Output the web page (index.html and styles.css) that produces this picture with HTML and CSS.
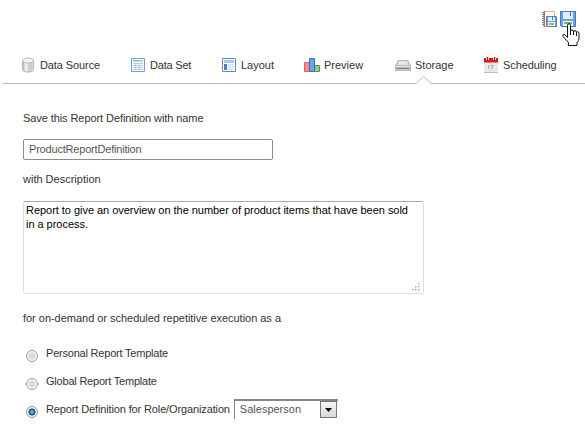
FILE: index.html
```html
<!DOCTYPE html>
<html lang="en">
<head>
<meta charset="utf-8">
<title>Report Storage</title>
<link rel="stylesheet" href="styles.css">
</head>
<body>
<div class="toolbar">
  <svg class="tool" width="16" height="16" viewBox="0 0 16 16">
    <path d="M2.500.5h11v15h-11z" fill="#fcfaf8" stroke="#cdb9aa"/>
    <path d="M3 0h1v16H3z" fill="#b96b42"/>
    <path d="M1 1.500h2M1 3.500h2M1 5.500h2M1 7.500h2M1 9.500h2M1 11.500h2M1 13.500h2" stroke="#888"/>
    <path d="M5.500 5.500h10v10h-9l-1-1z" fill="#6c9fe0" stroke="#4a7dc6"/>
    <path d="M7 6h7v4H7z" fill="#e3edfa"/><path d="M11 6h1v3h-1z" fill="#4a7dc6"/>
    <path d="M7 11h7v4H7z" fill="#f4faf0"/><path d="M8 12h5v2H8z" fill="#7cc763"/>
  </svg>
  <svg class="tool" width="16" height="16" viewBox="0 0 16 16">
    <path d="M.5.5h15v15h-14l-1-1z" fill="#6ba1e6" stroke="#4479c6"/>
    <path d="M3 1h10v7H3z" fill="#e3edfa"/><path d="M10 1h1v4h-1z" fill="#3d70b9"/>
    <path d="M3 10h10v5H3z" fill="#f4faf0"/><path d="M4 11h8v2H4z" fill="#69c44c"/>
  </svg>
  <svg class="pointer" width="18" height="24" viewBox="0 0 18 24">
    <path d="M5.500 14.500V2.500Q5.500.7 7 .7T8.500 2.500v6q0-1.500 1.500-1.500t1.500 2q0-1.300 1.500-1.300t1.500 2q0-1 1.200-1t1.300 1.800v5q0 2-2 4v3H6.500v-3L1 13.500q-.7-2 1-2 1.300 0 3.500 3z" fill="#fff" stroke="#111"/>
    <path d="M8.500 8v4M11.500 9v3M14.500 10v3" stroke="#111"/>
  </svg>
</div>
<nav class="tabs">
  <div class="tab source">
    <svg width="14" height="16" viewBox="0 0 14 16">
      <defs><linearGradient id="cyl"><stop stop-color="#aaa"/><stop offset=".3" stop-color="#f8f8f8"/><stop offset=".65" stop-color="#c8c8c8"/><stop offset="1" stop-color="#ddd"/></linearGradient></defs>
      <path d="M.5 3.500v9q0 2.500 5.500 2.500t5.500-2.500v-9z" fill="url(#cyl)" stroke="#b8b8b8"/>
      <ellipse cx="6" cy="3.500" rx="5.500" ry="2.500" fill="#f1f1f1" stroke="#bbb"/>
    </svg><span>Data Source</span>
  </div>
  <div class="tab set">
    <svg width="14" height="16" viewBox="0 0 14 16">
      <path d="M.5 1.500h13v13H.5z" fill="#fff" stroke="#739dde"/>
      <path d="M2 3h10v1.500H2z" fill="#8acb7b"/>
      <path d="M2 6.500h10M2 8.500h10M2 10.500h10M2 12.500h10M4.500 6v7M8.500 6v7" stroke="#b4cbed"/>
    </svg><span>Data Set</span>
  </div>
  <div class="tab layout">
    <svg width="14" height="16" viewBox="0 0 14 16">
      <path d="M.5 1.500h13v13H.5z" fill="#fff" stroke="#5c8bcb"/>
      <path d="M2 3h10v3H2z" fill="#a9c8ef"/><path d="M2 7h3v6H2z" fill="#4a80c6"/>
      <path d="M6.500 7.500h5v5h-5z" fill="#e8eef7" stroke="#d8e1ee"/>
    </svg><span>Layout</span>
  </div>
  <div class="tab preview">
    <svg width="16" height="16" viewBox="0 0 16 16">
      <path d="M.5 5.500h5v9h-5z" fill="#fa8a8a" stroke="#df6060"/>
      <path d="M10.500 8.500h5v6h-5z" fill="#91ca8c" stroke="#559b53"/>
      <path d="M5.500 1.500h5v13h-5z" fill="#6da2ef" stroke="#3c6fc6"/>
    </svg><span>Preview</span>
  </div>
  <div class="tab storage">
    <svg width="16" height="16" viewBox="0 0 16 16">
      <path d="M3 3h10l3 5.500V14H0V8.500z" fill="#b9b9b9"/>
      <path d="M4 4h8l2 4H2z" fill="#e6e6e6"/><path d="M1 9h14v1H1z" fill="#e5e5e5"/>
      <path d="M2 11h12v1H2z" fill="#777"/><path d="M1 12h14v1H1z" fill="#ccc"/>
    </svg><span>Storage</span>
    <svg class="notch" width="15" height="8" viewBox="0 0 15 8"><path d="M0 7h15v1H0z" fill="#fff"/><path d="M0 7.500 7.500.5 15 7.500" fill="#fff" stroke="#b8b8b8"/></svg>
  </div>
  <div class="tab scheduling">
    <svg width="14" height="16" viewBox="0 0 14 16">
      <path d="M0 5h14v10H0z" fill="#e9e9e9"/><path d="M0 1h14v4.500H0z" fill="#d9191b"/>
      <path d="M2 0h3v3H2zM9 0h3v3H9z" fill="#f6caca"/><path d="M3 0h1v3H3zM10 0h1v3h-1z" fill="#a32020"/>
      <path d="M4.500 8v4M6.500 8.500H9l-1.500 4" fill="none" stroke="#aaa"/><path d="M0 15.500h14" stroke="#bbb"/>
    </svg><span>Scheduling</span>
  </div>
</nav>
<main class="form">
  <label class="caption name-caption"><span>Save this Report Definition with name</span></label>
  <div class="name-field"><span>ProductReportDefinition</span></div>
  <label class="caption desc-caption"><span>with Description</span></label>
  <div class="description"><span>Report to give an overview on the number of product items that have been sold</span><br><span>in a process.</span>
    <svg class="grip" width="8" height="8" viewBox="0 0 8 8"><path d="M6 0h1.500v1.500H6zM3 3h1.500v1.500H3zM6 3h1.500v1.500H6zM0 6h1.500v1.500H0zM3 6h1.500v1.500H3zM6 6h1.500v1.500H6z" fill="#aaa"/></svg>
  </div>
  <div class="caption exec-caption"><span>for on-demand or scheduled repetitive execution as a</span></div>
  <div class="option"><i class="radio"></i><span class="personal">Personal Report Template</span></div>
  <div class="option"><i class="radio"></i><span class="global">Global Report Template</span></div>
  <div class="option"><i class="radio checked"></i><span class="role">Report Definition for Role/Organization</span>
    <div class="select"><span>Salesperson</span><b class="drop"><svg width="7" height="4" viewBox="0 0 7 4"><path d="M0 0h7L3.500 4z" fill="#000"/></svg></b></div>
  </div>
</main>
</body>
</html>
```
FILE: styles.css
```css
* { box-sizing: border-box; }
body {
  margin: 0;
  height: 437px;
  overflow: hidden;
  background: #fff;
  color: #333;
  font: 11px/14px "Liberation Sans", Arial, sans-serif;
  white-space: nowrap;
}
svg { display: block; flex: none; }
.toolbar {
  position: relative;
  display: flex;
  justify-content: flex-end;
  gap: 3px;
  height: 50px;
  padding: 11px 9px 0 0;
}
.pointer { position: absolute; left: 562px; top: 23px; }
.tabs {
  display: grid;
  grid-template-columns: 109px 91px 82px 91px 89px 1fr;
  height: 34px;
  margin-left: 3px;
  padding: 7px 0 0 19px;
  border-bottom: 1px solid #b8b8b8;
}
.tab { position: relative; display: flex; gap: 4px; height: 17px; line-height: 17px; }
.tab.set, .tab.layout, .tab.scheduling { gap: 5px; }
.source, .scheduling { letter-spacing: -.1px; }
.tab.set { letter-spacing: -.2px; }
.notch { position: absolute; left: 21px; top: 19px; }
.form { padding: 27px 0 0 23px; }
.caption { display: block; height: 14px; }
.name-caption { letter-spacing: -.08px; }
.name-field {
  width: 250px;
  height: 21px;
  margin: 14px 0 12px;
  padding-left: 5px;
  border: 1px solid #8b8b8b;
  border-radius: 2px;
  color: #555;
  line-height: 19px;
  letter-spacing: -.19px;
}
.description {
  position: relative;
  width: 401px;
  height: 93px;
  margin: 15px 0 17px;
  padding: 1px 2px;
  border: 1px solid #dcdfe6;
  border-top-color: #aaa;
  border-radius: 2px;
  color: #000;
  letter-spacing: -.035px;
}
.grip { position: absolute; right: 3px; bottom: 2px; }
.exec-caption { margin-bottom: 21px; letter-spacing: -.025px; }
.option { display: flex; height: 28px; padding-left: 3px; }
.personal, .global { letter-spacing: -.21px; }
.role { letter-spacing: -.13px; }
.radio {
  flex: none;
  width: 12px;
  height: 12px;
  margin: 4px 8px 0 0;
  border: 1px solid #999;
  border-radius: 50%;
  background: radial-gradient(circle, #d6d6d6 0 1px, #dedede 3px, #fff 5px);
}
.radio.checked { background: radial-gradient(circle at 50% 50%, #59b8e8 0 1px, #0d4468 3px, #f3f3f3 4px); }
.select {
  display: flex;
  width: 104px;
  height: 20px;
  margin: -3px 0 0 4px;
  padding: 0 1px 0 5px;
  border-top: 2px solid #858585;
  border-left: 1px solid #858585;
  color: #555;
  line-height: 16px;
}
.drop {
  display: grid;
  place-items: center;
  width: 17px;
  height: 17px;
  margin-left: auto;
  border: 1px solid #777;
  background: linear-gradient(#f6f6f6, #d8d8d8);
}
```
